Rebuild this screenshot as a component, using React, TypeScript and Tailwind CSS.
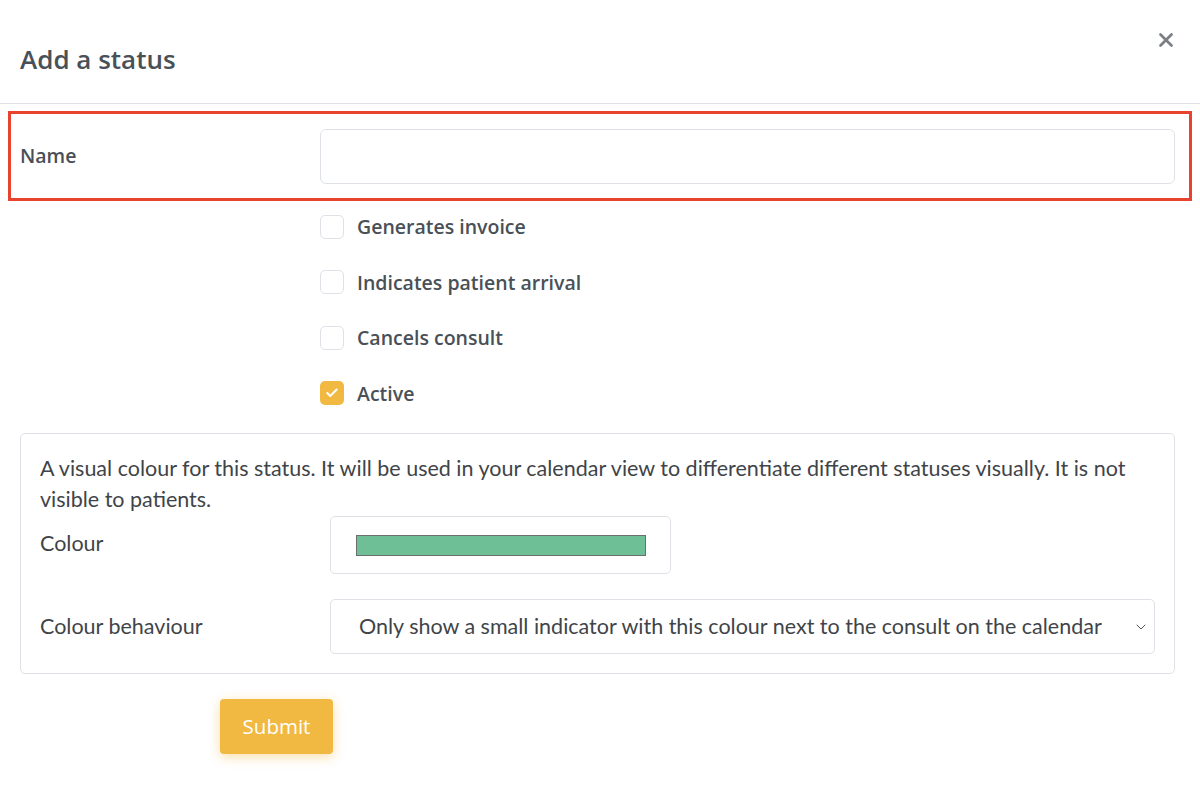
import React from "react";
import { X, Check, ChevronDown } from "lucide-react";

const checks = [
  { label: "Generates invoice", on: false },
  { label: "Indicates patient arrival", on: false },
  { label: "Cancels consult", on: false },
  { label: "Active", on: true },
];

export default function App() {
  return (
    <div className="min-h-screen w-[1200px] bg-white text-[#495057] font-['Open_Sans',sans-serif]">
      {/* HEADER */}
      <div className="flex justify-between h-[104px] border-b border-[#dee2e6] pl-5 pr-[23px]">
        <h2 className="pt-[41px] text-[26px] leading-[36px] font-semibold text-[#495057]">
          Add a status
        </h2>
        <button className="pt-[29px] h-fit text-[#7b7f84]" aria-label="Close">
          <X size={22} strokeWidth={3} />
        </button>
      </div>

      {/* NAME (highlighted) */}
      <div className="mx-2 mt-[7px] border-[3px] border-[#e8432e] flex items-center h-[90px] pl-[9px] pr-[14px]">
        <label className="w-[300px] text-[19.5px] font-semibold">Name</label>
        <input className="flex-1 h-[55px] rounded-md border border-[#dee2e6] outline-none px-3" />
      </div>

      {/* CHECKBOXES */}
      <div className="pl-[320px] mt-[-2px]">
        {checks.map((c) => (
          <div key={c.label} className="flex items-center h-[55.5px] gap-[13px]">
            {c.on ? (
              <span className="w-6 h-6 rounded-[5px] bg-[#f1b941] flex items-center justify-center text-white">
                <Check size={14} strokeWidth={3.5} />
              </span>
            ) : (
              <span className="w-6 h-6 rounded-[5px] border border-[#dee2e6] bg-white" />
            )}
            <span className="text-[19.5px] font-semibold text-[#495057]">{c.label}</span>
          </div>
        ))}
      </div>

      {/* COLOUR PANEL */}
      <div className="mx-5 mt-[12px] w-[1155px] border border-[#dee2e6] rounded-[5px] px-[19px] pt-[19px] pb-[19px] font-['Lato',sans-serif] text-[#3f4449]">
        <p className="text-[21.5px] leading-[31px]">
          A visual colour for this status. It will be used in your calendar view to differentiate different statuses visually. It is not visible to patients.
        </p>

        <div className="flex items-center mt-[1px]">
          <span className="w-[290px] text-[21.5px] pb-[4px]">Colour</span>
          <div className="w-[341px] h-[58px] rounded-[5px] border border-[#dee2e6] flex items-center pl-[25px]">
            <div className="w-[290px] h-[21px] bg-[#6fbf96] border border-[#6b6f6d]" />
          </div>
        </div>

        <div className="flex items-center mt-[25px]">
          <span className="w-[290px] text-[21.5px]">Colour behaviour</span>
          <div className="flex-1 h-[55px] rounded-[5px] border border-[#dee2e6] flex items-center justify-between pl-[28px] pr-[5px]">
            <span className="text-[21.5px]">
              Only show a small indicator with this colour next to the consult on the calendar
            </span>
            <ChevronDown size={16} strokeWidth={1.5} className="text-[#555]" />
          </div>
        </div>
      </div>

      {/* SUBMIT */}
      <div className="pl-[220px] mt-[25px]">
        <button className="w-[113px] h-[55px] rounded-[4px] bg-[#f1b941] text-white text-[20.5px] font-['Open_Sans',sans-serif] shadow-[0_3px_12px_rgba(241,185,65,0.45)]">
          Submit
        </button>
      </div>
    </div>
  );
}
